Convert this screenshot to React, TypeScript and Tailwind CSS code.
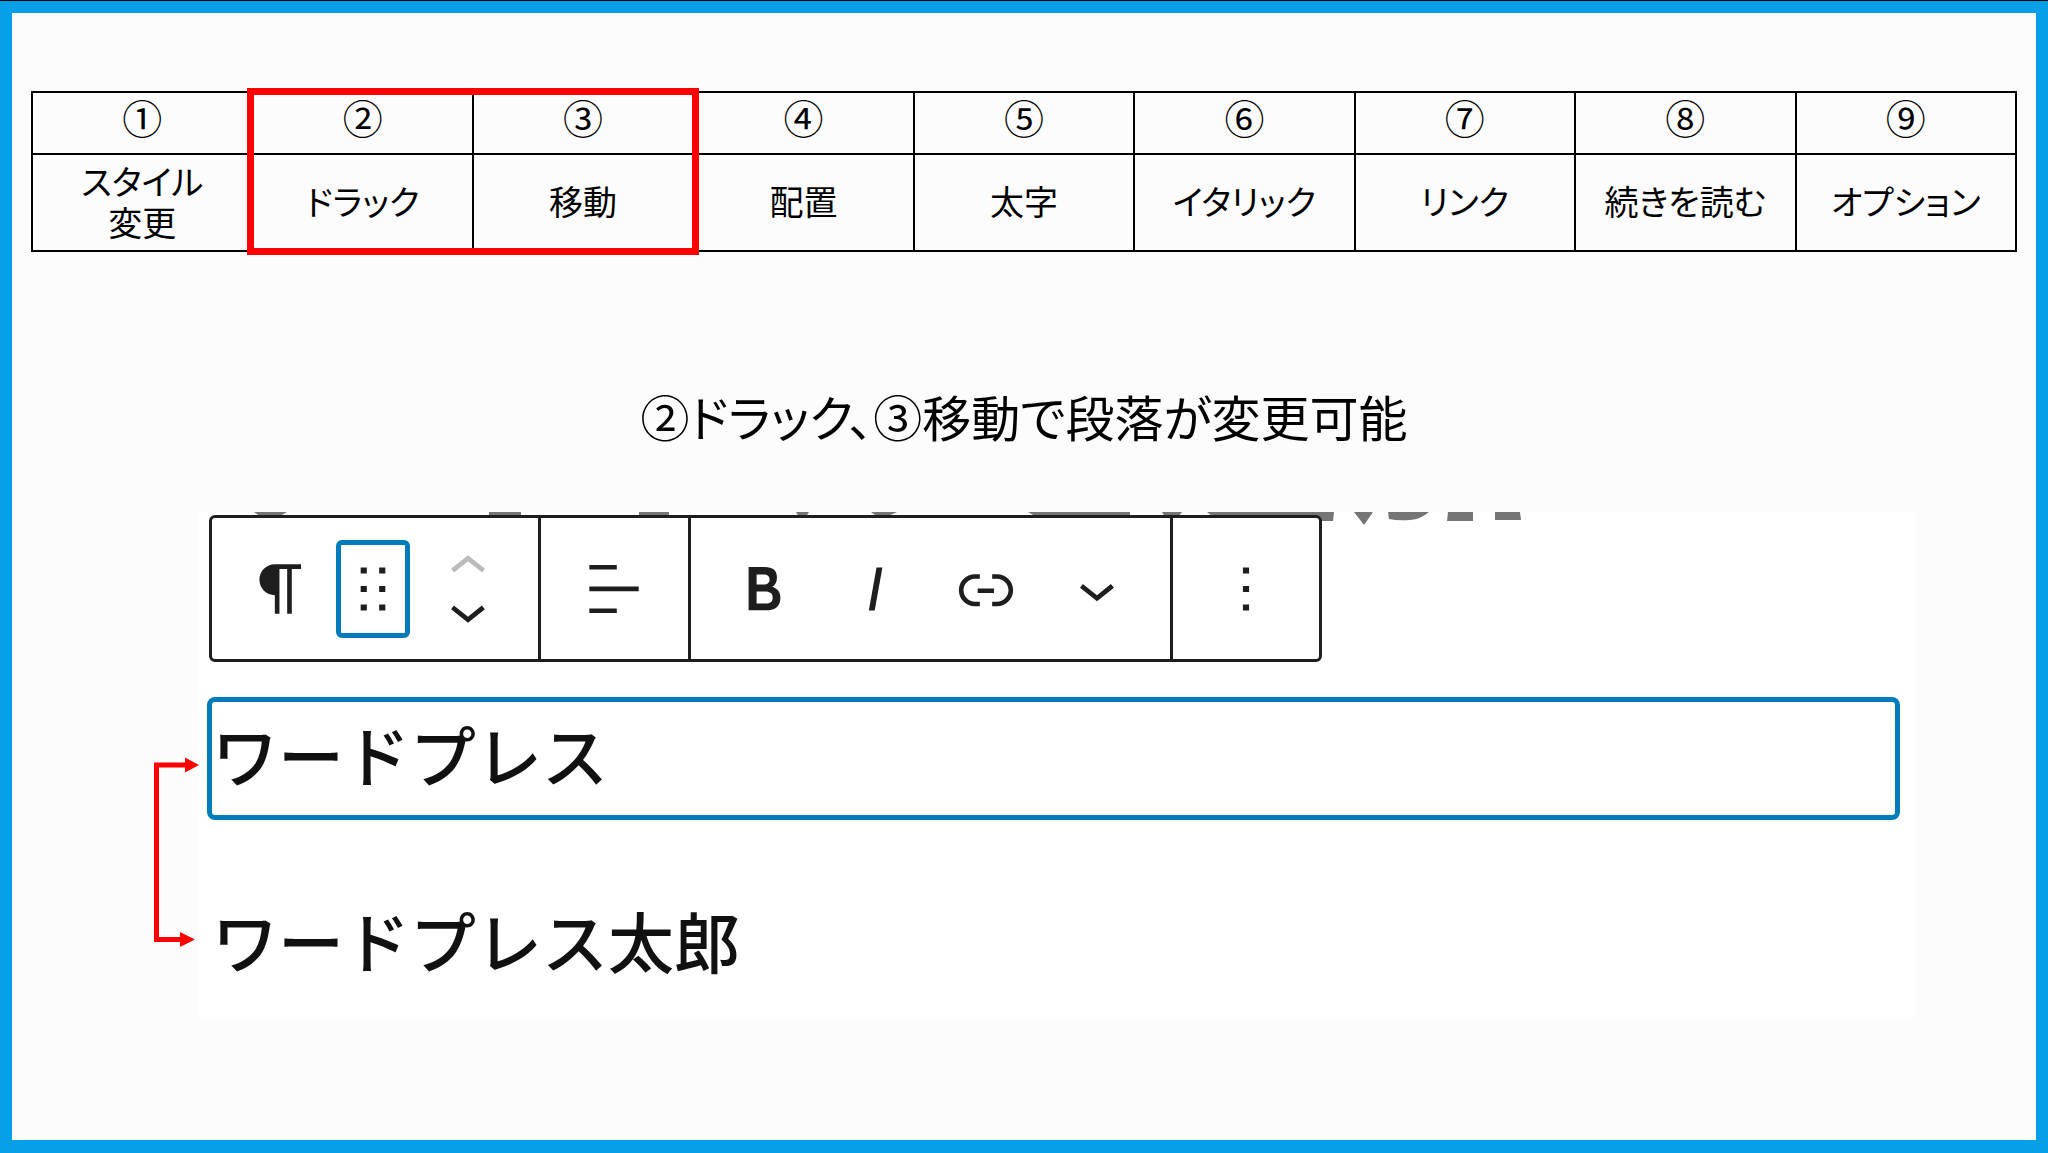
import type { ReactNode } from "react";
import clsx from "clsx";

type Tool = {
  mark: string;
  name: string;
};

const tools: Tool[] = [
  { mark: "①", name: "スタイル\n変更" },
  { mark: "②", name: "ドラック" },
  { mark: "③", name: "移動" },
  { mark: "④", name: "配置" },
  { mark: "⑤", name: "太字" },
  { mark: "⑥", name: "イタリック" },
  { mark: "⑦", name: "リンク" },
  { mark: "⑧", name: "続きを読む" },
  { mark: "⑨", name: "オプション" },
];

// 24px-grid icon paths
const icons = {
  paragraph:
    "m9.99609 14v-.2251l.00391.0001v6.225h1.5v-14.5h2.5v14.5h1.5v-14.5h3v-1.5h-8.50391c-2.76142 0-5 2.23858-5 5 0 2.7614 2.23858 5 5 5z",
  drag: "M8 7h2V5H8v2zm0 6h2v-2H8v2zm0 6h2v-2H8v2zm6-14v2h2V5h-2zm0 8h2v-2h-2v2zm0 6h2v-2h-2v2z",
  up: "M6.5 12.4L12 8l5.5 4.4-.9 1.2L12 10l-4.5 3.6-1-1.2z",
  down: "M17.5 11.6L12 16l-5.5-4.4.9-1.2L12 14l4.5-3.6 1 1.2z",
  align: "M4 19.8h8.9v-1.5H4v1.5zm8.9-15.6H4v1.5h8.9V4.2zm-8.9 7v1.5h16v-1.5H4z",
  bold: "M14.7 11.3c1-.6 1.5-1.6 1.5-3 0-2.3-1.3-3.4-4-3.4H7v14h5.8c1.4 0 2.5-.3 3.3-1 .8-.7 1.2-1.7 1.2-2.9.1-1.9-.8-3.1-2.6-3.7zm-5.1-4h2.3c.6 0 1.1.1 1.4.4.3.3.5.7.5 1.2s-.2 1-.5 1.2c-.3.3-.8.4-1.4.4H9.6V7.3zm4.6 9c-.4.3-1 .4-1.7.4H9.6v-3.9h2.9c.7 0 1.3.2 1.7.5.4.3.6.8.6 1.5s-.2 1.2-.6 1.5z",
  italic: "M12.5 5L10 19h1.9l2.5-14z",
  link: "M15.6 7.2H14v1.5h1.6c2 0 3.7 1.7 3.7 3.7s-1.7 3.7-3.7 3.7H14v1.5h1.6c2.8 0 5.2-2.3 5.2-5.2 0-2.9-2.3-5.2-5.2-5.2zM4.7 12.4c0-2 1.7-3.7 3.7-3.7H10V7.2H8.4c-2.9 0-5.2 2.3-5.2 5.2 0 2.9 2.3 5.2 5.2 5.2H10v-1.5H8.4c-2 0-3.7-1.7-3.7-3.7zm4.6.9h5.3v-1.5H9.3v1.5z",
  more: "M13 19h-2v-2h2v2zm0-6h-2v-2h2v2zm0-6h-2V5h2v2z",
};

type ToolButtonProps = {
  icon: keyof typeof icons;
  label: string;
  active?: boolean;
};

function ToolButton({ icon, label, active }: ToolButtonProps) {
  return (
    <button
      type="button"
      aria-label={label}
      className={clsx(
        "flex h-[98px] w-[74px] shrink-0 items-center justify-center rounded-md",
        active && "outline-[5px] -outline-offset-[5px] outline-[#007cba]"
      )}
    >
      <svg viewBox="0 0 24 24" className="size-[74px] shrink-0 fill-[#1e1e1e]" aria-hidden="true">
        <path d={icons[icon]} />
      </svg>
    </button>
  );
}

function MoverButton({ icon, label, disabled }: { icon: "up" | "down"; label: string; disabled?: boolean }) {
  return (
    <button type="button" aria-label={label} disabled={disabled} className="flex w-20 justify-center">
      <svg
        viewBox="0 5 24 14"
        className={clsx("h-[43px] w-[74px]", disabled ? "fill-[#bbbbbb]" : "fill-[#1e1e1e]")}
        aria-hidden="true"
      >
        <path d={icons[icon]} />
      </svg>
    </button>
  );
}

function ToolGroup({ className, children }: { className: string; children: ReactNode }) {
  return <div className={clsx("flex items-center", className)}>{children}</div>;
}

function ToolTable() {
  return (
    <div className="relative">
      <table className="w-full table-fixed border-collapse text-center text-[34px] leading-[41px] text-black">
        <thead>
          <tr className="h-[62px]">
            {tools.map((tool) => (
              <th key={tool.mark} scope="col" className="border-2 border-black p-0 pb-3 text-[40px] font-normal">
                {tool.mark}
              </th>
            ))}
          </tr>
        </thead>
        <tbody>
          <tr className="h-[97px]">
            {tools.map((tool) => (
              <td key={tool.mark} className="border-2 border-black p-0 pb-1 whitespace-pre-line">
                {tool.name}
              </td>
            ))}
          </tr>
        </tbody>
      </table>

      {/* Frame round columns 2 and 3 */}
      <div className="pointer-events-none absolute -top-[3px] -bottom-[3px] left-[calc(100%/9-5px)] w-[calc(200%/9+11px)] border-[7px] border-[#ff0000]" />
    </div>
  );
}

function SwapArrow() {
  return (
    <svg viewBox="0 0 45 505" className="h-[505px] w-[45px] shrink-0" aria-hidden="true">
      <path d="M34 253H2.5V427.5H28" fill="none" stroke="#ff0000" strokeWidth="5" />
      <path d="M31 245.500L45 253L31 260.500zM26 420L41 427.500L26 435z" fill="#ff0000" />
    </svg>
  );
}

// Bottom edge of the title that has scrolled away above the toolbar
function ScrolledTitle() {
  return (
    <svg viewBox="0 0 1330 16" className="absolute top-0 left-0 h-4 w-[1330px] fill-[#757575]" aria-hidden="true">
      <path d="M55 0H88Q84 3 79 4H63Q58 3 55 0zM290 0H322V5H290zM440 0H470V5H440z" />
      <path d="M597 0H610L607 5H600zM672 0H698Q692 3 686 5H681Q675 3 672 0z" />
      <path d="M829 0H931V5H840Q833 3 829 0zM963 0H983L979 5H966zM1008 0H1135L1134 9H1115V6H1018Q1012 4 1008 0z" />
      <path d="M1155 0H1174L1165 13zM1189 0H1230Q1222 7 1211 8Q1199 9 1190 7zM1249 0H1274V9H1248zM1296 0H1321L1322 8H1296z" />
    </svg>
  );
}

export default function App() {
  return (
    <div className="min-h-screen border-t border-black bg-[#fcfcfc] font-['Noto_Sans_CJK_JP',sans-serif]">
      <main className="min-h-[calc(100vh-1px)] border-x-[12px] border-t-[12px] border-b-[13px] border-[#069fe8] pt-[78px] [font-feature-settings:'palt']">
        <div className="px-[19px]">
          <ToolTable />
        </div>

        <h1 className="mt-[132px] text-center text-[49px] leading-[64px] text-black">
          ②ドラック、③移動で段落が変更可能
        </h1>

        <section className="mt-16 flex pr-[120px] pl-[142px]">
          <SwapArrow />

          <div className="relative min-w-0 flex-1 bg-white pt-[3px] pb-[30px] pl-2 [font-feature-settings:normal]">
            <ScrolledTitle />

            <div
              role="toolbar"
              aria-label="ブロックツール"
              className="relative ml-0.5 flex h-[147px] w-fit divide-x-[3px] divide-[#1e1e1e] rounded-md border-[3px] border-[#1e1e1e] bg-white"
            >
              <ToolGroup className="gap-[18px] pr-[30px] pl-8">
                <ToolButton icon="paragraph" label="スタイル変更" />
                <ToolButton icon="drag" label="ドラッグ" active />
                <div className="flex flex-col">
                  <MoverButton icon="up" label="上に移動" disabled />
                  <MoverButton icon="down" label="下に移動" />
                </div>
              </ToolGroup>
              <ToolGroup className="pr-[37px] pl-9">
                <ToolButton icon="align" label="配置" />
              </ToolGroup>
              <ToolGroup className="gap-[37px] px-9">
                <ToolButton icon="bold" label="太字" />
                <ToolButton icon="italic" label="イタリック" />
                <ToolButton icon="link" label="リンク" />
                <ToolButton icon="down" label="続きを読む" />
              </ToolGroup>
              <ToolGroup className="px-9">
                <ToolButton icon="more" label="オプション" />
              </ToolGroup>
            </div>

            <div className="mr-4 text-[66px] font-medium text-[#111111]">
              <p className="mt-[35px] flex h-[123px] items-center rounded-lg border-[5px] border-[#007cba] pb-3 leading-[96px]">
                ワードプレス
              </p>
              <p className="mt-[71px] pl-[5px] leading-[96px]">ワードプレス太郎</p>
            </div>
          </div>
        </section>
      </main>
    </div>
  );
}
